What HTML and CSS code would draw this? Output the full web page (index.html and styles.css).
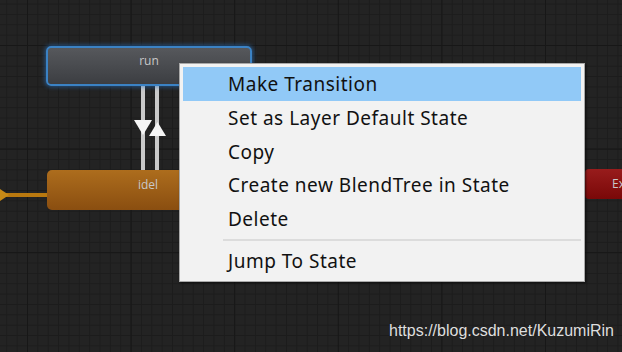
FILE: index.html
```html
<!DOCTYPE html>
<html lang="en">
<head>
  <meta charset="UTF-8">
  <title>Animator</title>
  <link rel="stylesheet" href="styles.css">
</head>
<body>
  <div id="graph">
    <svg class="links" width="622" height="352" viewBox="0 0 622 352">
      <!-- entry -> idel -->
      <line x1="0" y1="195" x2="47" y2="195" stroke="#b8780f" stroke-width="4"/>
      <polygon points="0,189 9,195 0,201" fill="#c88a16"/>
      <!-- run <-> idel -->
      <line x1="143" y1="86" x2="143" y2="170" stroke="#c9c9c9" stroke-width="4"/>
      <line x1="157" y1="86" x2="157" y2="170" stroke="#c9c9c9" stroke-width="4"/>
      <polygon points="134,120 152,120 143,135" fill="#f4f4f4"/>
      <polygon points="149,136 166,136 157.5,122" fill="#f4f4f4"/>
    </svg>

    <div class="node node-run selected">run</div>
    <div class="node node-idel">idel</div>
    <div class="node node-exit"><span>Exit</span></div>

    <div id="menu">
      <div class="item active">Make Transition</div>
      <div class="item">Set as Layer Default State</div>
      <div class="item">Copy</div>
      <div class="item">Create new BlendTree in State</div>
      <div class="item">Delete</div>
      <div class="sep"></div>
      <div class="item">Jump To State</div>
    </div>

    <div class="watermark">https://blog.csdn.net/KuzumiRin</div>
  </div>
</body>
</html>
```

FILE: styles.css
```css
* { box-sizing: border-box; }
body { margin: 0; width: 622px; height: 352px; overflow: hidden; background: #222; }

/* Graph canvas */
#graph {
  position: relative; width: 622px; height: 352px; overflow: hidden;
  background-color: #232323;
  background-image:
    linear-gradient(to right, #171717 1px, transparent 1px),
    linear-gradient(to bottom, #171717 1px, transparent 1px),
    linear-gradient(to right, #1c1c1c 1px, transparent 1px),
    linear-gradient(to bottom, #1c1c1c 1px, transparent 1px);
  background-size: 103.6px 103.6px, 103.6px 103.6px, 10.36px 10.36px, 10.36px 10.36px;
  background-position: 27px 45px, 27px 45px, 27px 45px, 27px 45px;
  font-family: "Noto Sans", "Open Sans", sans-serif;
}
.links { position: absolute; left: 0; top: 0; }

.node {
  position: absolute; display: flex; align-items: center; justify-content: center;
  border-radius: 5px; color: #c8c8c8; font-size: 12px;
  font-family: "Open Sans", "Noto Sans", sans-serif;
}
.node-run {
  left: 46px; top: 46px; width: 206px; height: 40px;
  background: linear-gradient(#56585c, #3c3e42);
  border: 2px solid #3b82c4;
  box-shadow: 0 0 4px 1px rgba(45, 120, 200, 0.6);
  padding-bottom: 11px;
}
.node-idel {
  left: 47px; top: 170px; width: 240px; height: 40px;
  background: linear-gradient(#ad6d1d, #8a4e10);
  justify-content: flex-start; padding-left: 91px; padding-bottom: 11px;
}
.node-exit {
  left: 585px; top: 169px; width: 37px; height: 30px;
  background: linear-gradient(#981c1c, #7a0808);
  border-radius: 4px 0 0 4px; overflow: hidden;
  justify-content: flex-start; padding-left: 27px; padding-bottom: 2px;
}

/* Context menu */
#menu {
  position: absolute; left: 179px; top: 63px; width: 406px; height: 219px;
  background: #f2f2f2; border: 1px solid #a9a9a9;
  box-shadow: 1px 1px 2px rgba(0, 0, 0, 0.6);
  padding: 3px 3px;
  display: flex; flex-direction: column;
}
#menu .item {
  height: 34px; padding-left: 45px; display: flex; align-items: center;
  font-size: 19px; letter-spacing: 0.5px; color: #111;
}
#menu .item.active { background: #91c9f7; }
#menu .sep { height: 8px; margin-left: 40px; display: flex; align-items: center; }
#menu .sep::before { content: ""; display: block; width: 100%; height: 2px; background: #dcdcdc; }

.watermark {
  position: absolute; left: 389px; top: 322px;
  font-family: "Liberation Sans", Arial, sans-serif; font-size: 16px;
  color: #dedede;
}
```
